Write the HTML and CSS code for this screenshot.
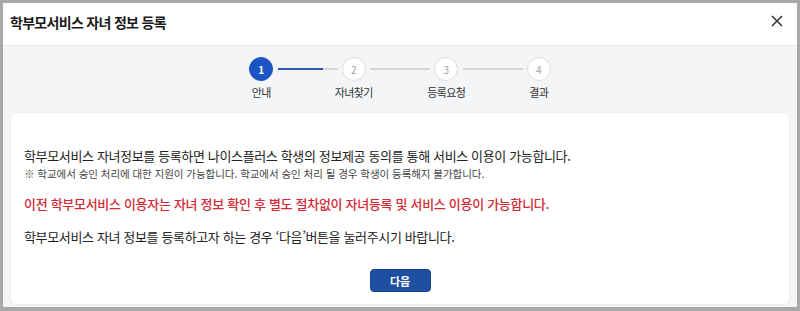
FILE: index.html
```html
<!DOCTYPE html>
<html lang="ko">
<head>
    <meta charset="UTF-8">
    <meta name="viewport" content="width=device-width, initial-scale=1.0">
    <title>학부모서비스 자녀 정보 등록</title>
    <link rel="stylesheet" href="styles.css">
</head>
<body>
    <div class="modal">
        <div class="modal-header">
            <h1>학부모서비스 자녀 정보 등록</h1>
            <button class="close-btn" aria-label="닫기">
                <svg width="12" height="12" viewBox="0 0 12 12">
                    <path d="M1 1 L11 11 M11 1 L1 11" stroke="#333" stroke-width="1.5" fill="none"/>
                </svg>
            </button>
        </div>

        <div class="modal-body">
            <!-- 단계 표시 -->
            <ol class="steps">
                <li class="step active"><span class="num">1</span><span class="label">안내</span></li>
                <li class="step"><span class="num">2</span><span class="label">자녀찾기</span></li>
                <li class="step"><span class="num">3</span><span class="label">등록요청</span></li>
                <li class="step"><span class="num">4</span><span class="label">결과</span></li>
            </ol>

            <div class="card">
                <p class="lead">학부모서비스 자녀정보를 등록하면 나이스플러스 학생의 정보제공 동의를 통해 서비스 이용이 가능합니다.</p>
                <p class="note">※ 학교에서 승인 처리에 대한 지원이 가능합니다. 학교에서 승인 처리 될 경우 학생이 등록해지 불가합니다.</p>
                <p class="warn">이전 학부모서비스 이용자는 자녀 정보 확인 후 별도 절차없이 자녀등록 및 서비스 이용이 가능합니다.</p>
                <p class="lead">학부모서비스 자녀 정보를 등록하고자 하는 경우 ‘다음’버튼을 눌러주시기 바랍니다.</p>
                <div class="actions">
                    <button class="btn-primary">다음</button>
                </div>
            </div>
        </div>
    </div>
</body>
</html>
```

FILE: styles.css
```css
* {
    margin: 0;
    padding: 0;
    box-sizing: border-box;
}

body {
    font-family: "Noto Sans CJK KR", "Noto Sans", sans-serif;
    background: #a9a9a9;
    padding: 3px 3px 4px;
    height: 311px;
    color: #222;
}

.modal {
    background: #f4f5f7;
    height: 100%;
    display: flex;
    flex-direction: column;
}

.modal-header {
    background: #fff;
    height: 43px;
    border-bottom: 1px solid #e6e7ea;
    display: flex;
    align-items: center;
    justify-content: space-between;
    padding: 0 14px 0 7px;
}

.modal-header h1 {
    font-size: 14px;
    font-weight: 700;
    letter-spacing: -0.7px;
    color: #1a1a1a;
    margin-top: -4px;
}

.close-btn {
    background: none;
    border: none;
    width: 12px;
    height: 12px;
    display: flex;
    cursor: pointer;
    margin-top: -6px;
}

.modal-body {
    flex: 1;
    padding: 11px 8px 3px;
    display: flex;
    flex-direction: column;
}

.steps {
    list-style: none;
    display: flex;
    justify-content: center;
    height: 56px;
}

.step {
    width: 92.5px;
    display: flex;
    flex-direction: column;
    align-items: center;
    position: relative;
}

.step + .step::before {
    content: "";
    position: absolute;
    top: 11px;
    right: calc(50% + 16px);
    width: 60px;
    height: 2px;
    background: #d4d6da;
}

.step:nth-child(2)::before {
    background: linear-gradient(to right, #2a5aa8 0 45px, #d4d6da 45px);
}

.step .num {
    width: 24px;
    height: 24px;
    border-radius: 50%;
    border: 1px solid #dcdde0;
    background: #fff;
    color: #a0a3a8;
    font-size: 10px;
    display: flex;
    align-items: center;
    justify-content: center;
}

.step.active .num {
    background: #1b55c4;
    border-color: #1b55c4;
    color: #fff;
    font-weight: 700;
}

.step .label {
    margin-top: 3px;
    font-size: 11px;
    color: #333;
    letter-spacing: -0.6px;
    white-space: nowrap;
}

.card {
    flex: 1;
    background: #fff;
    border-radius: 6px;
    box-shadow: 0 0 3px rgba(0, 0, 0, 0.08);
    padding: 34px 13px 0;
}

.lead {
    font-size: 13px;
    letter-spacing: -0.36px;
    line-height: 18px;
    color: #222;
}

.note {
    font-size: 10.5px;
    letter-spacing: -0.05px;
    line-height: 17px;
    color: #444;
}

.warn {
    font-size: 13px;
    letter-spacing: -0.3px;
    line-height: 18px;
    color: #d32a36;
    font-weight: 500;
    margin: 13px 0 15px;
}

.actions {
    display: flex;
    justify-content: center;
    margin-top: 23px;
}

.btn-primary {
    background: #1f4fa0;
    color: #fff;
    border: 1px solid #1a448a;
    border-radius: 4px;
    width: 61px;
    height: 23px;
    font-family: inherit;
    font-size: 11px;
    font-weight: 700;
    cursor: pointer;
}
```
